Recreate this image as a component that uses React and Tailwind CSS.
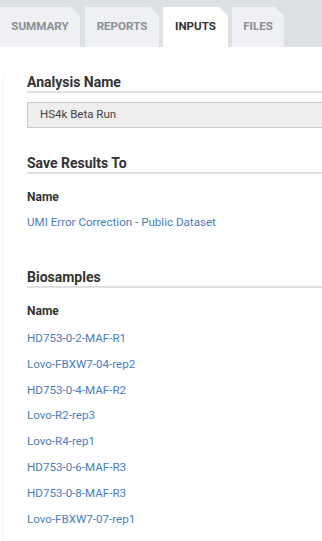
import React from "react";

const tabs = [
  { label: "SUMMARY", w: "w-[80px]" },
  { label: "REPORTS", w: "w-[74px]" },
  { label: "INPUTS", w: "w-[65px]", active: true },
  { label: "FILES", w: "w-[52px]" },
];

const biosamples = [
  "HD753-0-2-MAF-R1",
  "Lovo-FBXW7-04-rep2",
  "HD753-0-4-MAF-R2",
  "Lovo-R2-rep3",
  "Lovo-R4-rep1",
  "HD753-0-6-MAF-R3",
  "HD753-0-8-MAF-R3",
  "Lovo-FBXW7-07-rep1",
];

const Heading = ({ children, className = "" }) => (
  <h2
    className={`text-[14px] leading-[17px] font-bold text-[#333] border-b-2 border-[#e0e0e0] ${className}`}
  >
    {children}
  </h2>
);

const App = () => {
  return (
    <div className="w-[322px] h-[541px] bg-white overflow-hidden font-['Roboto','Liberation_Sans',sans-serif]">
      <div className="h-[47px] bg-[#dde0e5] flex items-end gap-[4px]">
        {tabs.map((t, i) => (
          <div
            key={t.label}
            className={`${t.w} h-[40px] flex items-center justify-center text-[11.6px] font-bold [clip-path:polygon(0_0,calc(100%-9px)_0,100%_9px,100%_100%,0_100%)] ${
              t.active ? "bg-white text-[#333]" : "bg-[#eef0f3] text-[#8c8f94]"
            } ${i === 1 ? "ml-[1px]" : ""}`}
          >
            {t.label}
          </div>
        ))}
      </div>

      <div className="ml-[3px] border-l border-[#f4f4f4] pl-[23px] pb-4">
        <Heading className="mt-[27px]">Analysis Name</Heading>
        <div className="mt-[9px] h-[26px] bg-[#eeeeee] border border-[#cacaca] border-r-0 flex items-center pl-[12px] text-[11.5px] text-[#444]">
          HS4k Beta Run
        </div>

        <Heading className="mt-[27px]">Save Results To</Heading>
        <div className="mt-[15px] text-[12px] leading-[16px] font-bold text-[#333]">
          Name
        </div>
        <a className="block mt-[9px] text-[11.6px] leading-[16px] text-[#4a7dbe]">
          UMI Error Correction - Public Dataset
        </a>

        <Heading className="mt-[39px]">Biosamples</Heading>
        <div className="mt-[15px] text-[12px] leading-[16px] font-bold text-[#333]">
          Name
        </div>
        <div className="mt-[11px] flex flex-col gap-[9.8px]">
          {biosamples.map((b) => (
            <a key={b} className="block text-[11.6px] leading-[16px] text-[#4a7dbe]">
              {b}
            </a>
          ))}
        </div>
      </div>
    </div>
  );
};

export default App;
